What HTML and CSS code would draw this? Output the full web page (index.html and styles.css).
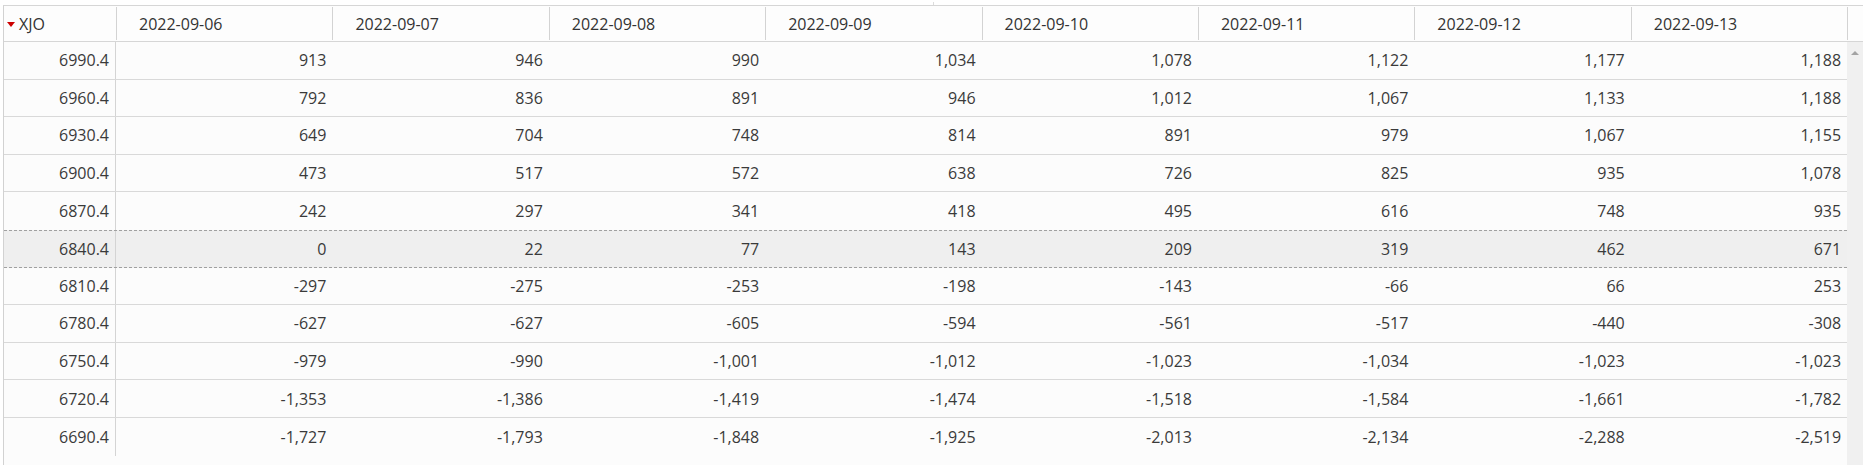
FILE: index.html
```html
<!DOCTYPE html>
<html>
<head>
<meta charset="utf-8">
<link rel="stylesheet" href="styles.css">
</head>
<body>
<div class="page">
  <div class="topstrip"><div class="tick"></div></div>
  <div class="grid">
    <div class="head">
      <div class="hc first"><span class="sort"></span>XJO</div>
      <div class="hc"><span>2022-09-06</span></div>
      <div class="hc"><span>2022-09-07</span></div>
      <div class="hc"><span>2022-09-08</span></div>
      <div class="hc"><span>2022-09-09</span></div>
      <div class="hc"><span>2022-09-10</span></div>
      <div class="hc"><span>2022-09-11</span></div>
      <div class="hc"><span>2022-09-12</span></div>
      <div class="hc"><span>2022-09-13</span></div>
      <div class="hc filler"></div>
    </div>
    <div class="bodywrap">
      <div class="rows">
        <div class="row"><div class="c k">6990.4</div><div class="c">913</div><div class="c">946</div><div class="c">990</div><div class="c">1,034</div><div class="c">1,078</div><div class="c">1,122</div><div class="c">1,177</div><div class="c">1,188</div></div>
        <div class="row"><div class="c k">6960.4</div><div class="c">792</div><div class="c">836</div><div class="c">891</div><div class="c">946</div><div class="c">1,012</div><div class="c">1,067</div><div class="c">1,133</div><div class="c">1,188</div></div>
        <div class="row"><div class="c k">6930.4</div><div class="c">649</div><div class="c">704</div><div class="c">748</div><div class="c">814</div><div class="c">891</div><div class="c">979</div><div class="c">1,067</div><div class="c">1,155</div></div>
        <div class="row"><div class="c k">6900.4</div><div class="c">473</div><div class="c">517</div><div class="c">572</div><div class="c">638</div><div class="c">726</div><div class="c">825</div><div class="c">935</div><div class="c">1,078</div></div>
        <div class="row before-cur"><div class="c k">6870.4</div><div class="c">242</div><div class="c">297</div><div class="c">341</div><div class="c">418</div><div class="c">495</div><div class="c">616</div><div class="c">748</div><div class="c">935</div></div>
        <div class="row cur"><div class="c k">6840.4</div><div class="c">0</div><div class="c">22</div><div class="c">77</div><div class="c">143</div><div class="c">209</div><div class="c">319</div><div class="c">462</div><div class="c">671</div></div>
        <div class="row"><div class="c k">6810.4</div><div class="c">-297</div><div class="c">-275</div><div class="c">-253</div><div class="c">-198</div><div class="c">-143</div><div class="c">-66</div><div class="c">66</div><div class="c">253</div></div>
        <div class="row"><div class="c k">6780.4</div><div class="c">-627</div><div class="c">-627</div><div class="c">-605</div><div class="c">-594</div><div class="c">-561</div><div class="c">-517</div><div class="c">-440</div><div class="c">-308</div></div>
        <div class="row"><div class="c k">6750.4</div><div class="c">-979</div><div class="c">-990</div><div class="c">-1,001</div><div class="c">-1,012</div><div class="c">-1,023</div><div class="c">-1,034</div><div class="c">-1,023</div><div class="c">-1,023</div></div>
        <div class="row"><div class="c k">6720.4</div><div class="c">-1,353</div><div class="c">-1,386</div><div class="c">-1,419</div><div class="c">-1,474</div><div class="c">-1,518</div><div class="c">-1,584</div><div class="c">-1,661</div><div class="c">-1,782</div></div>
        <div class="row last"><div class="c k">6690.4</div><div class="c">-1,727</div><div class="c">-1,793</div><div class="c">-1,848</div><div class="c">-1,925</div><div class="c">-2,013</div><div class="c">-2,134</div><div class="c">-2,288</div><div class="c">-2,519</div></div>
      </div>
      <div class="scrollbar"><div class="arrow-up"></div></div>
    </div>
  </div>
</div>
</body>
</html>
```
FILE: styles.css
```css
html, body {
  margin: 0;
  padding: 0;
  background: #ffffff;
}
body {
  font-family: "Open Sans", "Noto Sans", sans-serif;
  font-size: 16px;
  color: #3a3a3a;
  width: 1863px;
  height: 465px;
  overflow: hidden;
}
.page {
  padding-left: 3px;
}
.topstrip {
  height: 5px;
  display: flex;
}
.tick {
  margin-left: 930px;
  margin-top: 2px;
  width: 1px;
  height: 3px;
  background: #dcdcdc;
}
.grid {
  border-top: 1px solid #d6d6d6;
  border-left: 1px solid #d2d2d2;
  height: 459px;
  display: flex;
  flex-direction: column;
  background: #fcfcfc;
}
.head {
  display: grid;
  grid-template-columns: 112px repeat(8, 216.4px) 1fr;
  height: 36px;
  border-bottom: 1px solid #d6d6d6;
  background: #fdfdfd;
  box-sizing: border-box;
  padding: 1px 0 1px 0;
}
.hc {
  display: flex;
  align-items: center;
  border-left: 1px solid #d3d3d3;
  padding-left: 22px;
  color: #333333;
  white-space: nowrap;
  line-height: 1;
}
.hc.first {
  border-left: none;
  padding-left: 3px;
}
.sort {
  width: 0;
  height: 0;
  border-left: 4.5px solid transparent;
  border-right: 4.5px solid transparent;
  border-top: 5px solid #cc0000;
  margin-right: 4px;
  margin-top: 1px;
}
.bodywrap {
  flex: 1;
  display: flex;
}
.rows {
  width: 1843.2px;
}
.row {
  display: grid;
  grid-template-columns: 112px repeat(8, 216.4px);
  height: 37.6px;
  box-sizing: border-box;
  border-bottom: 1px solid #d9d9d9;
}
.row.last {
  border-bottom: none;
}
.row.before-cur {
  border-bottom: none;
}
.row.cur {
  background: #efefef;
  border-top: 1px dashed #a0a0a0;
  border-bottom: 1px dashed #a0a0a0;
}
.c {
  display: flex;
  align-items: center;
  justify-content: flex-end;
  padding-right: 6px;
  white-space: nowrap;
  line-height: 1;
}
.c.k {
  border-right: 1px solid #d4d4d4;
  padding-right: 6px;
}
.scrollbar {
  width: 16px;
  margin-left: auto;
  background: #f0f0f0;
  display: flex;
  justify-content: center;
}
.arrow-up {
  margin-top: 9px;
  width: 0;
  height: 0;
  border-left: 4px solid transparent;
  border-right: 4px solid transparent;
  border-bottom: 4px solid #a3a3a3;
}
```
